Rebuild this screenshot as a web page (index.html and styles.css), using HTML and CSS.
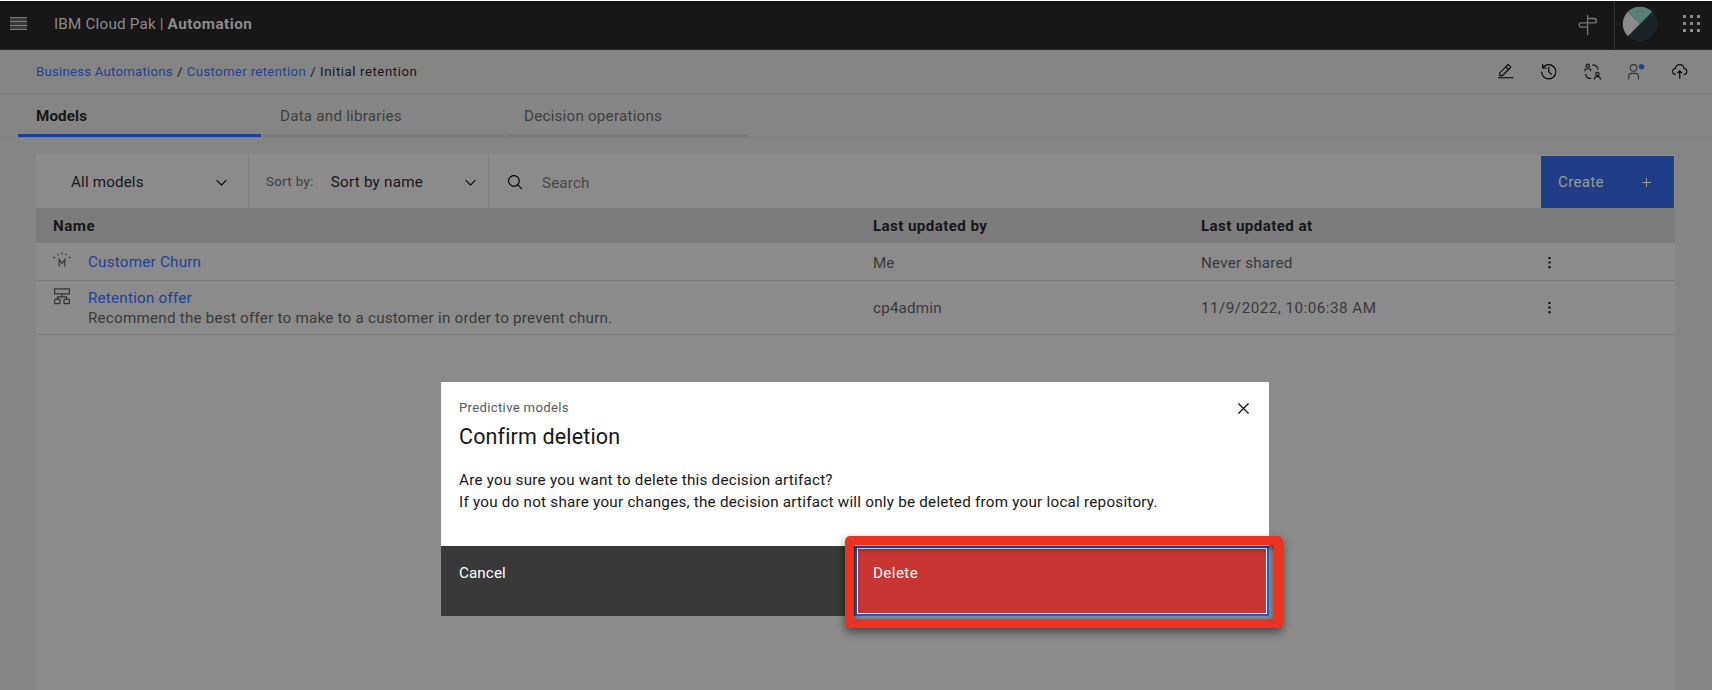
FILE: index.html
```html
<!DOCTYPE html>
<html lang="en">
<head>
<meta charset="utf-8">
<title>IBM Cloud Pak | Automation</title>
<link rel="stylesheet" href="styles.css">
</head>
<body>
<header class="topbar">
  <svg class="burger" width="17" height="14" viewBox="0 0 17 14"><rect width="17" height="13" fill="#3a3a3a"/><path d="M0 .5h17M0 4.500h17M0 8.500h17M0 12.500h17" stroke="#7c7c7c" stroke-width="1.200"/></svg>
  <div class="brand"><span class="t-brand">IBM Cloud Pak |</span> <b class="t-auto">Automation</b></div>
  <svg class="sign" width="20" height="20" viewBox="0 0 20 20" fill="none" stroke="#777" stroke-width="1.300"><path d="M9.600 0v20M9.600 3.500h6.600q2.200 0 2.200 2.200t-2.200 2.200H3.400Q1.200 7.900 1.200 10t2.200 2.100h6.200"/></svg>
  <div class="user">
    <svg width="36" height="36" viewBox="0 0 36 36"><circle cx="18" cy="18" r="17.300" fill="#1b2329"/><path d="M5.800 5.800A17.300 17.300 0 0 1 30.200 5.800L18 18z" fill="#568078"/><path d="M5.800 5.800A17.300 17.300 0 0 0 5.800 30.200L18 18z" fill="#8a8a8a"/></svg>
  </div>
  <svg class="apps" width="17" height="17" viewBox="0 0 17 17" fill="#8a8a8a"><path d="M0 0h3v3H0zM7 0h3v3H7zM14 0h3v3h-3zM0 7h3v3H0zM7 7h3v3H7zM14 7h3v3h-3zM0 14h3v3H0zM7 14h3v3H7zM14 14h3v3h-3z"/></svg>
</header>

<nav class="crumbs">
  <a class="t-c1">Business Automations</a><i>/</i><a class="t-c2">Customer retention</a><i>/</i><span class="t-c3">Initial retention</span>
  <div class="actions">
    <svg viewBox="0 0 32 32"><path d="M2 26h28v2H2zM25.400 9c.8-.8.8-2 0-2.800l-3.600-3.600c-.8-.8-2-.8-2.800 0l-15 15V24h6.400zM20.400 4 24 7.600l-3 3L17.400 7zM6 22v-3.600l10-10 3.600 3.600-10 10z"/></svg>
    <svg viewBox="0 0 32 32"><path d="M20.590 22 15 16.410V7h2v8.580l5 5.010zM16 2A13.940 13.940 0 0 0 6 6.230V2H4v8h8V8H7.080A12 12 0 1 1 4 16H2A14 14 0 1 0 16 2Z"/></svg>
    <svg viewBox="0 0 32 32" fill="none" stroke="#171717" stroke-width="2.200"><circle cx="7" cy="5" r="3"/><path d="M2 15v-4h10v4"/><circle cx="24.500" cy="20" r="3"/><path d="M19 30v-2l3-3h5l3 3v2M15 4h5l4 3 1.500 5M3 20l1.500 5 3.500 3h5"/></svg>
    <svg viewBox="0 0 32 32"><path fill="#333" d="M12 4a5 5 0 1 1-5 5 5 5 0 0 1 5-5m0-2a7 7 0 1 0 7 7A7 7 0 0 0 12 2zM22 30h-2v-5a5 5 0 0 0-5-5H9a5 5 0 0 0-5 5v5H2v-5a7 7 0 0 1 7-7h6a7 7 0 0 1 7 7z"/><circle cx="26.500" cy="7" r="5" fill="#1f419b"/></svg>
    <svg viewBox="0 0 32 32"><path d="m11 18 1.410 1.410L15 16.830V29h2V16.830l2.590 2.580L21 18l-5-5zM23.500 22H23v-2h.5a4.500 4.500 0 0 0 .36-9H23l-.1-.82a7 7 0 0 0-13.880 0L9 11h-.86a4.500 4.500 0 0 0 .36 9H9v2h-.5A6.500 6.500 0 0 1 7.200 9.140a9 9 0 0 1 17.600 0A6.500 6.500 0 0 1 23.500 22Z"/></svg>
  </div>
</nav>

<nav class="tabs">
  <div class="tab on"><span class="t-t1">Models</span></div>
  <div class="tab"><span class="t-t2">Data and libraries</span></div>
  <div class="tab"><span class="t-t3">Decision operations</span></div>
</nav>

<main class="panel">
  <div class="toolbar">
    <div class="filter"><span class="t-all">All models</span><svg class="chev" viewBox="0 0 16 16"><path d="M8 11 3 6l.7-.7L8 9.600l4.300-4.300.7.7z"/></svg></div>
    <div class="sort"><span class="t-sb">Sort by:</span><span class="t-sn">Sort by name</span><svg class="chev" viewBox="0 0 16 16"><path d="M8 11 3 6l.7-.7L8 9.600l4.300-4.300.7.7z"/></svg></div>
    <div class="search"><svg width="17" height="17" viewBox="0 0 32 32"><path d="m29 27.590-7.550-7.560a11 11 0 1 0-1.420 1.420L27.590 29ZM4 13a9 9 0 1 1 9 9 9 9 0 0 1-9-9Z"/></svg><span class="t-se">Search</span></div>
    <div class="create"><span class="t-cr">Create</span><svg width="9" height="9" viewBox="0 0 9 9"><path d="M4 0h1v9H4zM0 4h9v1H0z" fill="#999"/></svg></div>
  </div>
  <div class="row head"><div><span class="t-h1">Name</span></div><div><span class="t-h2">Last updated by</span></div><div><span class="t-h2">Last updated at</span></div><div></div></div>
  <div class="row r1">
    <div class="name"><svg width="18" height="16" viewBox="0 0 18 16" fill="none" stroke="#333" stroke-width="1.100"><path d="M6.200 14.500V7.500L9 11.500l2.800-4v7M9 .5v2M4.500 1.800l.8 1.500M13.500 1.800l-.8 1.500M.3 5l2 1M17.700 5l-2 1"/></svg><div class="text"><a class="t-n1">Customer Churn</a></div></div>
    <div class="low"><span class="t-u1">Me</span></div><div class="low"><span class="t-d1">Never shared</span></div><div class="menu low"><svg width="3" height="12" viewBox="0 0 3 12"><path d="M.5 0h2v2h-2zM.5 4.600h2v2h-2zM.5 9.200h2v2h-2z"/></svg></div>
  </div>
  <div class="row r2">
    <div class="name"><svg width="18" height="17" viewBox="0 0 18 17" fill="none" stroke="#333" stroke-width="1.200"><path d="M1.600.8h14.800v5H1.600zM9 5.800v3M4.500 11V8.800h9V11"/><rect x="1.600" y="11.200" width="5.400" height="4.500" rx="1"/><rect x="11" y="11.200" width="5.400" height="4.500" rx="1"/></svg><div class="text"><a class="t-n2">Retention offer</a><span class="t-n3">Recommend the best offer to make to a customer in order to prevent churn.</span></div></div>
    <div><span class="t-u2">cp4admin</span></div><div><span class="t-d2">11/9/2022, 10:06:38 AM</span></div><div class="menu"><svg width="3" height="12" viewBox="0 0 3 12"><path d="M.5 0h2v2h-2zM.5 4.600h2v2h-2zM.5 9.200h2v2h-2z"/></svg></div>
  </div>
</main>

<section class="modal">
  <div class="body">
    <div class="label"><span class="t-m1">Predictive models</span><svg width="11" height="11" viewBox="0 0 11 11" stroke="#161616" stroke-width="1.300"><path d="m.4.4 10.200 10.200M10.600.4.4 10.600"/></svg></div>
    <h2><span class="t-m2">Confirm deletion</span></h2>
    <p><span class="t-m3">Are you sure you want to delete this decision artifact?</span></p>
    <p><span class="t-m4">If you do not share your changes, the decision artifact will only be deleted from your local repository.</span></p>
  </div>
  <div class="buttons"><div class="cancel"><span class="t-b1">Cancel</span></div><div class="delete"><span class="t-b2">Delete</span></div></div>
  <div class="marker"></div>
</section>
</body>
</html>
```
FILE: styles.css
```css
*{box-sizing:border-box}
html,body{height:100%}
body{margin:0;background:#858585;color:#171717;font:15.2px/20px Roboto,"Open Sans",sans-serif;position:relative;overflow:hidden;display:flex;flex-direction:column}
svg{display:block;flex:none}
span,a,b{white-space:nowrap}
a{color:#1f419b}
.topbar{height:50px;flex:none;background:#171717;border-top:1px solid #fff;border-bottom:1px solid #262626;display:flex;align-items:center;padding:0 12px 2px 10px;color:#8b8b8b}
.burger{margin-right:27px}
.brand{flex:1}
.t-brand{letter-spacing:.22px}
.t-auto{letter-spacing:.5px}
.sign{margin:2px 16px 0 0}
.user{border-left:1px solid #303030;height:48px;padding:5px 25px 0 7px;margin-bottom:-2px}
.apps{margin-top:-1px}
.crumbs{height:44px;flex:none;border-bottom:1px solid #7b7b7b;display:flex;align-items:center;padding:0 24px 0 36px;font-size:13.2px}
.crumbs i{font-style:normal;width:14px;text-align:center}
.t-c1{letter-spacing:.24px}
.t-c2{letter-spacing:.35px}
.t-c3{letter-spacing:.58px}
.actions{margin-left:auto;display:flex;gap:26px}
.actions svg{width:17.500px;height:17.500px}
.tabs{height:44px;flex:none;border-bottom:1px solid #7d7d7d;display:flex;gap:1px;padding-left:18px}
.tab{width:243px;border-bottom:3px solid #7b7b7b;padding:12px 0 0 18px;color:#3f3f3f;letter-spacing:.22px}
.on{border-color:#1f419b;color:#171717;font-weight:700;letter-spacing:.1px}
.panel{flex:1;margin:16px 37px 0 36px;background:#8b8b8b}
.toolbar{height:54px;padding:2px 1px 0 0;display:flex}
.toolbar>div{display:flex;align-items:center}
.filter{width:213px;border-right:1px solid #7d7d7d;padding:0 18px 0 35px;letter-spacing:.15px}
.sort{width:240px;border-right:1px solid #7d7d7d;padding:0 9px 0 17px}
.t-sb{font-size:13.2px;color:#3f3f3f;margin-right:17px;letter-spacing:.4px}
.t-sn{letter-spacing:.25px}
.chev{width:17px;height:17px;margin-left:auto}
.search{flex:1;padding:1px 0 0 18px;gap:18px;color:#484848;letter-spacing:.15px}
.create{width:133px;background:#1f3e87;color:#999;padding:0 23px 0 17px;justify-content:space-between;letter-spacing:.25px}
.row{display:grid;grid-template-columns:820px 328px 357px 1fr;align-items:center;color:#3a3a3a;border-bottom:1px solid #797979}
.row>div{padding-left:17px}
.head{height:35px;background:#7c7c7c;border:0;color:#171717;font-weight:700}
.t-h1{letter-spacing:.5px}
.t-h2{letter-spacing:.38px}
.r1{height:38px}
.r2{height:54px}
.low{padding-top:2px}
.name{display:flex;gap:17px;align-items:flex-start}
.text{display:flex;flex-direction:column;align-items:flex-start;letter-spacing:.23px}
.t-u2,.t-d1{letter-spacing:.2px}
.t-d2{letter-spacing:.5px}
.row .menu{padding-left:7px}
.modal{position:absolute;left:441px;top:382px;width:828px;height:234px;display:flex;flex-direction:column}
.body{height:164px;background:#fff;color:#161616;padding:16px 20px 0 18px}
.label{display:flex;justify-content:space-between;align-items:center;font-size:13.2px;color:#5a5a5a;letter-spacing:.3px}
h2{margin:5px 0 19px;font:400 21.500px/28px Roboto,sans-serif;letter-spacing:.15px}
p{margin:0;line-height:21.500px;letter-spacing:.25px}
.buttons{flex:1;display:flex;color:#fff;letter-spacing:.1px}
.buttons div{width:414px;background:#393939;padding:17px 0 0 18px}
.buttons .delete{background:#c83532;border:2px solid #2458d8;box-shadow:inset 0 0 0 1px #fff;padding:15px 0 0 16px;letter-spacing:.4px}
.marker{position:absolute;left:404px;top:154px;width:438px;height:92px;border:9px solid #ea3323;border-radius:5px;box-shadow:0 4px 8px rgba(0,0,0,.5),inset 0 3px 6px rgba(0,0,0,.5)}
```
